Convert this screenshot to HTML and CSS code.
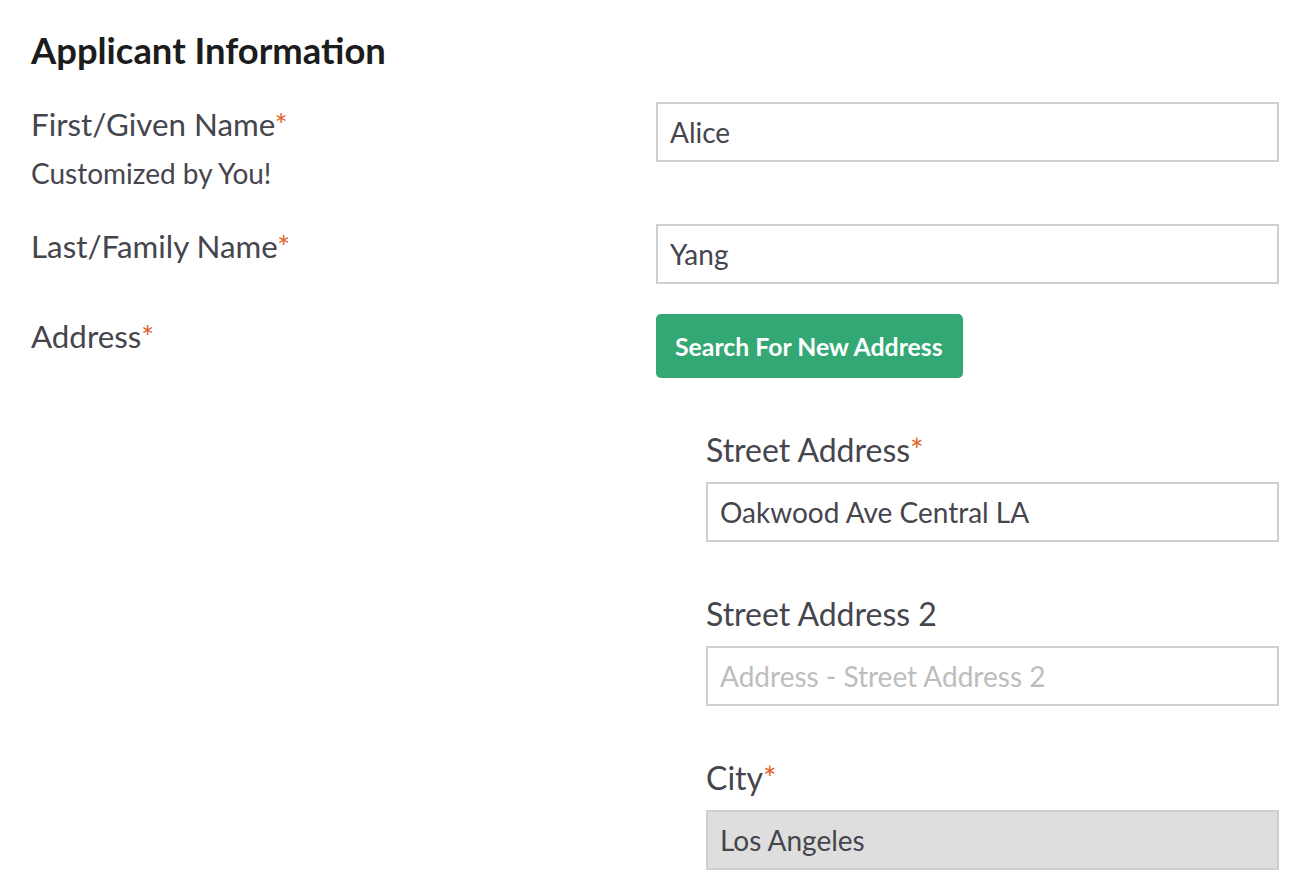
FILE: index.html
```html
<!DOCTYPE html>
<html lang="en">
<head>
<meta charset="utf-8">
<title>Applicant Information</title>
<link rel="stylesheet" href="styles.css">
</head>
<body>
<main class="page">
  <h1 class="title">Applicant Information</h1>

  <div class="row row-first">
    <div class="label-col">
      <label class="label">First/Given Name<span class="req">*</span></label>
      <div class="hint">Customized by You!</div>
    </div>
    <div class="field-col">
      <input class="input" type="text" value="Alice">
    </div>
  </div>

  <div class="row row-last">
    <div class="label-col">
      <label class="label">Last/Family Name<span class="req">*</span></label>
    </div>
    <div class="field-col">
      <input class="input" type="text" value="Yang">
    </div>
  </div>

  <div class="row row-address">
    <div class="label-col">
      <label class="label">Address<span class="req">*</span></label>
    </div>
    <div class="field-col">
      <button class="btn" type="button">Search For New Address</button>
      <div class="sub">
        <div class="sub-field">
          <label class="sub-label">Street Address<span class="req">*</span></label>
          <input class="input" type="text" value="Oakwood Ave Central LA">
        </div>
        <div class="sub-field">
          <label class="sub-label">Street Address 2</label>
          <input class="input" type="text" placeholder="Address - Street Address 2">
        </div>
        <div class="sub-field">
          <label class="sub-label">City<span class="req">*</span></label>
          <input class="input input-disabled" type="text" value="Los Angeles" readonly>
        </div>
      </div>
    </div>
  </div>
</main>
</body>
</html>
```

FILE: styles.css
```css
* {
  box-sizing: border-box;
}

html, body {
  margin: 0;
  padding: 0;
  background: #ffffff;
}

body {
  font-family: Lato, "Open Sans", "Liberation Sans", sans-serif;
  color: #45454d;
}

.page {
  padding: 0 33px 0 31px;
}

.title {
  margin: 0;
  padding-top: 28px;
  font-size: 36.4px;
  line-height: 44px;
  font-weight: 700;
  color: #1c1c1c;
}

.row {
  display: grid;
  grid-template-columns: 625px 1fr;
  align-items: start;
}

.row-first {
  margin-top: 30px;
}

.row-last {
  margin-top: 34px;
}

.row-address {
  margin-top: 30px;
}

.label {
  display: block;
  font-size: 31.3px;
  line-height: 40px;
  margin-top: 2px;
}

.req {
  color: #e0642e;
}

.hint {
  font-size: 28px;
  line-height: 34px;
  margin-top: 12px;
}

.input {
  display: block;
  width: 100%;
  height: 60px;
  border: 2px solid #cfcfcf;
  border-radius: 0;
  background: #ffffff;
  padding: 0 12px;
  font-family: Lato, "Open Sans", "Liberation Sans", sans-serif;
  font-size: 28px;
  color: #45454d;
  outline: none;
}

.input::placeholder {
  color: #bdbdbd;
}

.input-disabled {
  background: #dedede;
}

.btn {
  display: inline-block;
  height: 64px;
  padding: 0 20px 0 19px;
  border: none;
  border-radius: 5px;
  background: #33a875;
  color: #ffffff;
  font-family: Lato, "Open Sans", "Liberation Sans", sans-serif;
  font-size: 24.8px;
  font-weight: 700;
}

.sub {
  padding-left: 50px;
  margin-top: 52px;
}

.sub-field + .sub-field {
  margin-top: 52px;
}

.sub-label {
  display: block;
  font-size: 32px;
  line-height: 40px;
  margin: 0 0 12px;
}
```
